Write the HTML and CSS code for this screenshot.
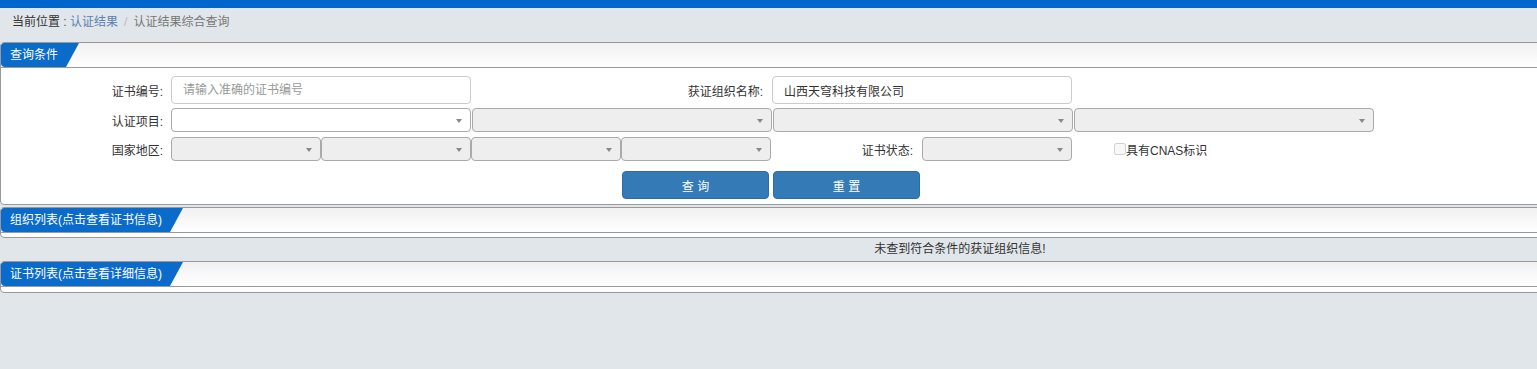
FILE: index.html
```html
<!DOCTYPE html>
<html lang="zh-CN">
<head>
    <meta charset="UTF-8">
    <meta name="viewport" content="width=device-width, initial-scale=1.0">
    <title>认证结果综合查询</title>
    <link rel="stylesheet" href="styles.css">
</head>
<body>
    <div class="top-bar"></div>
    <div class="breadcrumb">
        <span class="crumb-title">当前位置</span><span class="crumb-colon">&nbsp;:&nbsp;</span><a href="#" class="crumb-link">认证结果</a><span class="crumb-sep">/</span><span class="crumb-current">认证结果综合查询</span>
    </div>

    <div class="main">
        <div class="panel">
            <div class="panel-header"><span class="panel-tab">查询条件</span></div>
            <div class="search-form">
                <div class="form-row row-text">
                    <label class="form-label">证书编号:</label>
                    <input type="text" class="text-input" placeholder="请输入准确的证书编号">
                    <label class="form-label label-mid">获证组织名称:</label>
                    <input type="text" class="text-input" value="山西天穹科技有限公司">
                </div>
                <div class="form-row row-project">
                    <label class="form-label">认证项目:</label>
                    <div class="select select-wide select-active"></div>
                    <div class="select select-wide"></div>
                    <div class="select select-wide"></div>
                    <div class="select select-wide"></div>
                </div>
                <div class="form-row row-region">
                    <label class="form-label">国家地区:</label>
                    <div class="select select-small"></div>
                    <div class="select select-small"></div>
                    <div class="select select-small"></div>
                    <div class="select select-small"></div>
                    <label class="form-label label-status">证书状态:</label>
                    <div class="select select-small"></div>
                    <label class="check-label"><input type="checkbox" disabled>具有CNAS标识</label>
                </div>
                <div class="button-row">
                    <button class="btn">查 询</button>
                    <button class="btn">重 置</button>
                </div>
            </div>
        </div>

        <div class="panel panel-list">
            <div class="panel-header"><span class="panel-tab">组织列表(点击查看证书信息)</span></div>
            <div class="panel-empty"></div>
        </div>
        <div class="no-result">未查到符合条件的获证组织信息!</div>

        <div class="panel">
            <div class="panel-header"><span class="panel-tab">证书列表(点击查看详细信息)</span></div>
            <div class="panel-empty panel-empty-tall"></div>
        </div>
    </div>
</body>
</html>
```

FILE: styles.css
```css
html, body {
    overflow-x: hidden;
}

body {
    margin: 0;
    font-family: "Liberation Sans", "Noto Sans CJK SC", sans-serif;
    font-size: 12px;
    color: #333;
    background-color: #e1e6ea;
}

.top-bar {
    height: 8px;
    background-color: #0066cc;
}

.breadcrumb {
    height: 34px;
    box-sizing: border-box;
    padding: 5px 12px 0;
    line-height: 18px;
}

.crumb-title {
    color: #333;
}

.crumb-colon {
    color: #555;
}

.crumb-link {
    color: #5b7fb3;
    text-decoration: none;
}

.crumb-sep {
    color: #bbb;
    padding: 0 6px;
}

.crumb-current {
    color: #777;
}

.main {
    width: 1920px;
}

.panel {
    background-color: #fff;
    border: 1px solid #999;
    border-radius: 4px;
}

.panel-header {
    height: 24px;
    border-bottom: 1px solid #999;
    background: linear-gradient(#f1f1f1, #fff);
}

.panel-tab {
    display: inline-block;
    height: 24px;
    line-height: 24px;
    padding: 0 21px 0 9px;
    color: #fff;
    background-color: #0a6bcb;
    border-radius: 3px 0 0 4px;
    clip-path: polygon(0 0, 100% 0, calc(100% - 13px) 100%, 0 100%);
}

.search-form {
    padding: 8px 0 5px;
}

.form-row {
    display: flex;
    align-items: center;
}

.row-project {
    margin-top: 4px;
}

.row-region {
    margin-top: 5px;
}

.form-label {
    width: 170px;
    box-sizing: border-box;
    padding-right: 8px;
    text-align: right;
}

.label-mid {
    width: 301px;
    padding-right: 9px;
}

.label-status {
    width: 151px;
    padding-right: 9px;
}

.text-input {
    width: 300px;
    height: 28px;
    box-sizing: border-box;
    margin: 0;
    padding: 0 11px;
    border: 1px solid #ccc;
    border-radius: 4px;
    font-family: inherit;
    font-size: 12px;
    color: #333;
    outline: none;
}

.text-input::placeholder {
    color: #999;
}

.select {
    position: relative;
    height: 24px;
    box-sizing: border-box;
    border: 1px solid #aaa;
    border-radius: 4px;
    background-color: #eee;
}

.select::after {
    content: "";
    position: absolute;
    right: 8px;
    top: 10px;
    border-left: 3px solid transparent;
    border-right: 3px solid transparent;
    border-top: 4px solid #888;
}

.select-active {
    background-color: #fff;
}

.select-wide {
    width: 300px;
    margin-right: 1px;
}

.select-small {
    width: 150px;
}

.check-label {
    display: flex;
    align-items: center;
    margin-left: 42px;
}

.check-label input {
    width: 12px;
    height: 12px;
    margin: 0;
}

.button-row {
    display: flex;
    gap: 4px;
    margin-top: 10px;
    padding-left: 621px;
}

.btn {
    width: 147px;
    height: 28px;
    padding: 0;
    border: 1px solid #2e6da4;
    border-radius: 4px;
    background-color: #337ab7;
    color: #fff;
    font-family: inherit;
    font-size: 12px;
    cursor: pointer;
}

.panel-list {
    margin-top: 2px;
}

.panel-empty {
    height: 4px;
}

.panel-empty-tall {
    height: 5px;
}

.no-result {
    height: 23px;
    line-height: 23px;
    text-align: center;
}
```
